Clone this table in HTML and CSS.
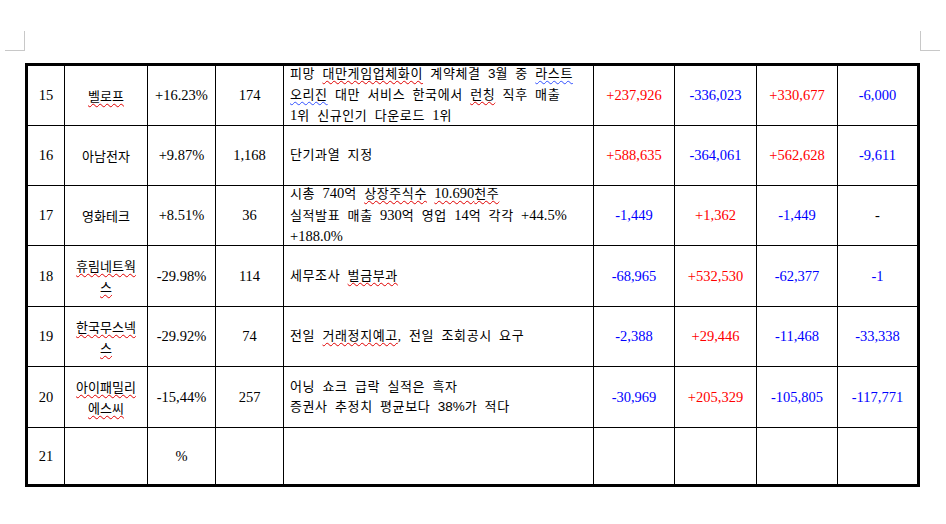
FILE: index.html
```html
<!DOCTYPE html>
<html lang="ko">
<head>
<meta charset="utf-8">
<title>표</title>
<link rel="stylesheet" href="styles.css">
</head>
<body>
<div class="page-top">
  <div class="mark mark-left"></div>
  <div class="mark mark-right"></div>
</div>
<div class="table">
  <div class="c">15</div>
  <div class="c name"><span class="sp">벨로프</span></div>
  <div class="c">+16.23%</div>
  <div class="c">174</div>
  <div class="c desc"><div>피망 <span class="sp">대만게임업체화이</span> 계약체결 <span class="sans">3</span>월 중 <span class="spb">라스트</span><br><span class="spb">오리진</span> 대만 서비스 한국에서 <span class="sp">런칭</span> 직후 매출<br><span class="num">1</span>위 신규인기 다운로드 <span class="num">1</span>위</div></div>
  <div class="c red">+237,926</div>
  <div class="c blue">-336,023</div>
  <div class="c red">+330,677</div>
  <div class="c blue last">-6,000</div>

  <div class="c">16</div>
  <div class="c name">아남전자</div>
  <div class="c">+9.87%</div>
  <div class="c">1,168</div>
  <div class="c desc"><div>단기과열 지정</div></div>
  <div class="c red">+588,635</div>
  <div class="c blue">-364,061</div>
  <div class="c red">+562,628</div>
  <div class="c blue last">-9,611</div>

  <div class="c">17</div>
  <div class="c name">영화테크</div>
  <div class="c">+8.51%</div>
  <div class="c">36</div>
  <div class="c desc"><div>시총 <span class="num">740</span>억 <span class="sp">상장주식수</span> <span class="sp"><span class="num">10.690</span>천주</span><br>실적발표 매출 <span class="num">930</span>억 영업 <span class="num">14</span>억 각각 <span class="num">+44.5%</span><br><span class="num">+188.0%</span></div></div>
  <div class="c blue">-1,449</div>
  <div class="c red">+1,362</div>
  <div class="c blue">-1,449</div>
  <div class="c last">-</div>

  <div class="c">18</div>
  <div class="c name"><span class="sp">휴림네트웍스</span></div>
  <div class="c">-29.98%</div>
  <div class="c">114</div>
  <div class="c desc"><div>세무조사 <span class="sp">벌금부과</span></div></div>
  <div class="c blue">-68,965</div>
  <div class="c red">+532,530</div>
  <div class="c blue">-62,377</div>
  <div class="c blue last">-1</div>

  <div class="c">19</div>
  <div class="c name"><span class="sp">한국무스넥스</span></div>
  <div class="c">-29.92%</div>
  <div class="c">74</div>
  <div class="c desc"><div>전일 <span class="sp">거래정지예고</span>, 전일 조회공시 요구</div></div>
  <div class="c blue">-2,388</div>
  <div class="c red">+29,446</div>
  <div class="c blue">-11,468</div>
  <div class="c blue last">-33,338</div>

  <div class="c">20</div>
  <div class="c name"><span class="sp">아이패밀리에스씨</span></div>
  <div class="c">-15,44%</div>
  <div class="c">257</div>
  <div class="c desc"><div>어닝 쇼크 급락 실적은 흑자<br>증권사 추정치 평균보다 <span class="sans">38%</span>가 적다</div></div>
  <div class="c blue">-30,969</div>
  <div class="c red">+205,329</div>
  <div class="c blue">-105,805</div>
  <div class="c blue last">-117,771</div>

  <div class="c bottom">21</div>
  <div class="c bottom name"></div>
  <div class="c bottom">%</div>
  <div class="c bottom"></div>
  <div class="c bottom desc"></div>
  <div class="c bottom"></div>
  <div class="c bottom"></div>
  <div class="c bottom"></div>
  <div class="c bottom last"></div>
</div>
</body>
</html>
```

FILE: styles.css
```css
html, body {
  margin: 0;
  padding: 0;
  background: #ffffff;
}

body {
  width: 946px;
  height: 524px;
  overflow: hidden;
  font-family: "Liberation Serif", "Noto Sans CJK KR", serif;
  color: #000000;
}

.page-top {
  height: 63px;
  box-sizing: border-box;
  padding: 31px 6px 0 5px;
  display: flex;
  justify-content: space-between;
  align-items: flex-start;
}

.mark {
  width: 20px;
  height: 20px;
  box-sizing: border-box;
  border-bottom: 1px solid #c8c8c8;
}

.mark-left {
  border-right: 1px solid #c8c8c8;
}

.mark-right {
  border-left: 1px solid #c8c8c8;
}

.table {
  margin-left: 25px;
  width: 895px;
  box-sizing: border-box;
  border: 3px solid #000000;
  display: grid;
  grid-template-columns: 37px 83px 68px 68px 310px 81px 82px 81px 79px;
  grid-template-rows: 60px 60px 60px 61px 60px 61px 56px;
}

.c {
  box-sizing: border-box;
  border-right: 1px solid #000000;
  border-bottom: 1px solid #000000;
  display: flex;
  align-items: center;
  justify-content: center;
  text-align: center;
  padding: 0 7px;
  font-size: 14.5px;
  line-height: 21px;
  white-space: nowrap;
}

.c.last {
  border-right: none;
}

.c.bottom {
  border-bottom: none;
}

.name {
  white-space: normal;
  font-size: 13px;
  font-family: "Noto Sans CJK KR", sans-serif;
  line-height: 21px;
}

.desc {
  justify-content: flex-start;
  text-align: left;
  padding: 0 2px 0 6px;
  font-size: 13px;
  line-height: 20.5px;
  letter-spacing: 0.6px;
  word-spacing: 3.5px;
  font-family: "Liberation Serif", "Noto Sans CJK KR", serif;
}

.desc .num {
  font-size: 14.5px;
  letter-spacing: 0;
}

.desc .sans {
  font-family: "Liberation Sans", "Noto Sans CJK KR", sans-serif;
  font-size: 13.5px;
  letter-spacing: 0;
}

.red {
  color: #ff0000;
}

.blue {
  color: #0000ff;
}

.sp {
  text-decoration: underline wavy #e00000;
  text-decoration-thickness: 1px;
  text-underline-offset: 2px;
}

.spb {
  text-decoration: underline wavy #3050ff;
  text-decoration-thickness: 1px;
  text-underline-offset: 2px;
}
```
